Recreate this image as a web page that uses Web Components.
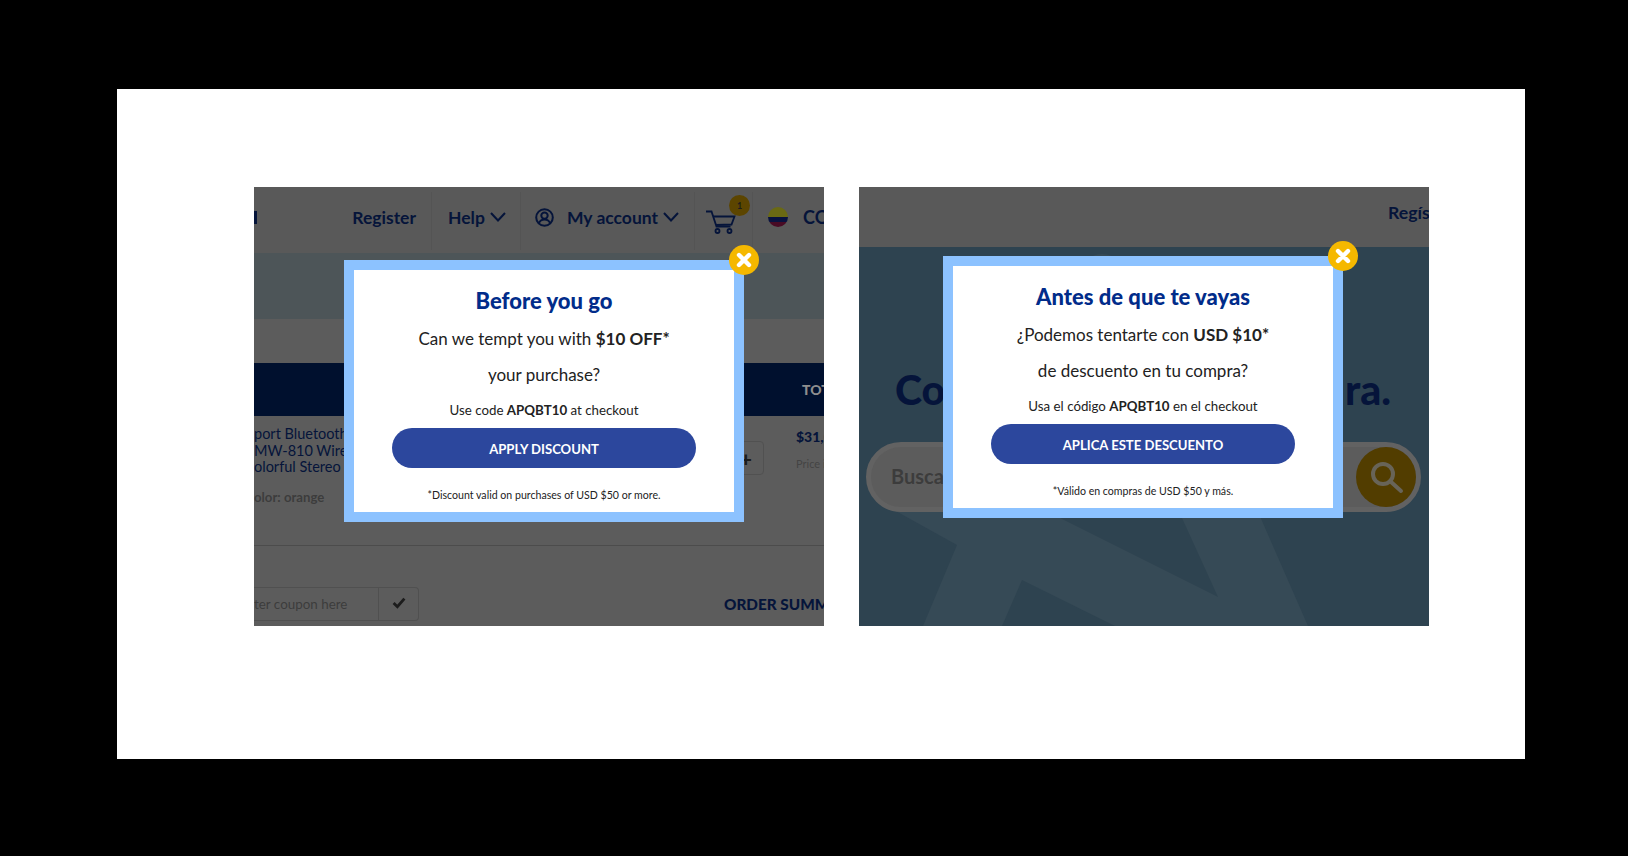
<!DOCTYPE html>
<html lang="en">
<head>
<meta charset="utf-8">
<title>Exit popups</title>
<style>
  html, body { margin: 0; background: #000; }
  body { font-family: Lato, "Liberation Sans", sans-serif; }
</style>
</head>
<body>
<slide-sheet>
  <cart-page>
    <promo-modal>
      <span slot="heading">Before you go</span>
      <span slot="first">Can we tempt you with <b>$10 OFF*</b></span>
      <span slot="second">your purchase?</span>
      <span slot="code">Use code <b>APQBT10</b> at checkout</span>
      <span slot="action">APPLY DISCOUNT</span>
      <span slot="note">*Discount valid on purchases of USD $50 or more.</span>
    </promo-modal>
  </cart-page>
  <search-page>
    <promo-modal>
      <span slot="heading">Antes de que te vayas</span>
      <span slot="first">¿Podemos tentarte con <b>USD $10*</b></span>
      <span slot="second">de descuento en tu compra?</span>
      <span slot="code">Usa el código <b>APQBT10</b> en el checkout</span>
      <span slot="action">APLICA ESTE DESCUENTO</span>
      <span slot="note">*Válido en compras de USD $50 y más.</span>
    </promo-modal>
  </search-page>
</slide-sheet>

<script>
class SlideSheet extends HTMLElement {
  constructor() {
    super();
    this.attachShadow({ mode: 'open' });
    this.shadowRoot.innerHTML = `
      <style>
        :host {
          display: flex;
          gap: 35px;
          box-sizing: border-box;
          width: 1408px;
          height: 670px;
          margin: 89px 0 0 117px;
          padding: 98px 0 0 137px;
          background: #fff;
        }
      </style>
      <slot></slot>
    `;
  }
}

class PromoModal extends HTMLElement {
  constructor() {
    super();
    this.attachShadow({ mode: 'open' });
    this.shadowRoot.innerHTML = `
      <style>
        :host {
          position: absolute;
          z-index: 2;
          box-sizing: border-box;
          width: 400px;
          height: 262px;
          padding-top: 14px;
          border: 10px solid #8cc2ff;
          background: #fff;
          color: #222;
          text-align: center;
          font-family: Lato, "Liberation Sans", sans-serif;
        }
        .close {
          position: absolute;
          top: -25px;
          right: -25px;
          width: 30px;
          height: 30px;
          border-radius: 50%;
          background: #f5b800;
          display: flex;
          align-items: center;
          justify-content: center;
        }
        h2 {
          margin: 0;
          font-size: 22px;
          line-height: 34px;
          font-weight: 900;
          color: #012c8a;
        }
        p { margin: 0; }
        .line { font-size: 17px; line-height: 36px; }
        .line.first { margin-top: 3px; }
        .code { font-size: 13.3px; line-height: 20px; margin-top: 7px; }
        .action {
          display: flex;
          align-items: center;
          justify-content: center;
          box-sizing: border-box;
          width: 304px;
          height: 40px;
          margin: 8px auto 0;
          padding-top: 1px;
          border-radius: 20px;
          background: #2c479d;
          color: #fff;
          font-size: 13.1px;
          font-weight: 700;
        }
        .note { font-size: 10.6px; line-height: 20px; margin-top: 17px; }
      </style>
      <div class="close">
        <svg width="16" height="16" viewBox="0 0 16 16"><path d="M3 3l10 10M13 3L3 13" stroke="#fff" stroke-width="4.4" stroke-linecap="round"/></svg>
      </div>
      <h2><slot name="heading"></slot></h2>
      <p class="line first"><slot name="first"></slot></p>
      <p class="line"><slot name="second"></slot></p>
      <p class="code"><slot name="code"></slot></p>
      <div class="action"><slot name="action"></slot></div>
      <p class="note"><slot name="note"></slot></p>
    `;
  }
}

class CartPage extends HTMLElement {
  constructor() {
    super();
    this.attachShadow({ mode: 'open' });
    this.shadowRoot.innerHTML = `
      <style>
        :host {
          display: block;
          position: relative;
          flex: none;
          width: 570px;
          height: 439px;
          background: #5c5c5c;
          font-family: Lato, "Liberation Sans", sans-serif;
          white-space: nowrap;
          --ink: #05143a;
        }
        ::slotted(promo-modal) { left: 90px; top: 73px; }
        .clip { width: 100%; height: 100%; overflow: hidden; }
        header {
          display: flex;
          height: 66px;
          background: #595959;
          color: var(--ink);
          font-size: 17.5px;
          font-weight: 700;
        }
        .nav {
          display: flex;
          flex: none;
          align-items: center;
          box-sizing: border-box;
          height: 58px;
          margin-top: 5px;
          padding-bottom: 8px;
          border-right: 1px solid #545454;
        }
        .register { width: 178px; justify-content: space-between; padding-right: 15px; }
        .sliver { width: 3px; height: 13px; background: var(--ink); }
        .help { width: 89px; padding-left: 16px; gap: 5px; }
        .account { width: 174px; padding-left: 14px; }
        .account svg:first-child { margin-right: 13px; }
        .account svg:last-child { margin-left: 5px; }
        .cart { width: 58px; padding-left: 10px; position: relative; }
        .cart svg { margin-top: 9px; }
        .badge {
          position: absolute;
          left: 34px;
          top: 3px;
          width: 21px;
          height: 21px;
          border-radius: 50%;
          background: #5c4500;
          color: #1c1c1c;
          font-size: 9px;
          line-height: 21px;
          text-align: center;
        }
        .country { padding-left: 15px; gap: 15px; font-size: 18px; border: 0; }
        .band { height: 66px; background: #4d5558; }
        .gap { height: 44px; }
        .titles {
          height: 53px;
          padding-left: 548px;
          background: #00102e;
          color: #8e8e8e;
          font-size: 14px;
          font-weight: 900;
          line-height: 54px;
        }
        .row {
          display: grid;
          grid-template-columns: 434px 44px auto;
          column-gap: 32px;
          box-sizing: border-box;
          height: 130px;
          border-bottom: 1px solid #4c4c4c;
        }
        .name { padding-top: 10px; color: var(--ink); font-size: 14.5px; line-height: 16.5px; }
        .name small { display: block; margin-top: 13px; color: #3c3c3c; font-size: 13.2px; font-weight: 700; }
        .qty {
          display: flex;
          align-items: center;
          justify-content: flex-end;
          box-sizing: border-box;
          height: 34px;
          margin-top: 25px;
          padding-right: 11px;
          border: 1px solid #515151;
          border-radius: 4px;
          color: #1c1c1c;
          font-size: 21px;
          font-weight: 900;
        }
        .price { padding-top: 12px; color: var(--ink); font-size: 14px; font-weight: 900; }
        .price small { display: block; margin-top: 12px; color: #444; font-size: 11px; font-weight: 400; }
        .bottom { display: flex; align-items: center; height: 34px; margin-top: 41px; }
        .coupon {
          display: flex;
          flex: none;
          align-items: center;
          box-sizing: border-box;
          width: 125px;
          height: 34px;
          border: 1px solid #505050;
          border-left: 0;
          color: #3c3c3c;
          font-size: 13.4px;
        }
        .check {
          display: flex;
          flex: none;
          align-items: center;
          justify-content: center;
          box-sizing: border-box;
          width: 40px;
          height: 34px;
          padding-bottom: 2px;
          border: 1px solid #505050;
          border-left: 0;
          border-radius: 0 4px 4px 0;
        }
        .summary { flex: none; margin-left: 305px; color: var(--ink); font-size: 15.3px; font-weight: 900; }
      </style>
      <div class="clip">
        <header>
          <div class="nav register"><span class="sliver"></span><span>Register</span></div>
          <div class="nav help">Help
            <svg width="16" height="10" viewBox="0 0 16 10"><path d="M1 1l7 7.500L15 1" fill="none" stroke="currentColor" stroke-width="2"/></svg>
          </div>
          <div class="nav account">
            <svg width="19" height="19" viewBox="0 0 19 19" fill="none" stroke="currentColor" stroke-width="2"><circle cx="9.500" cy="9.500" r="8.300"/><circle cx="9.500" cy="7.600" r="3.200"/><path d="M3.800 15.600c1-3 3.200-4 5.700-4s4.700 1 5.700 4"/></svg>
            My account
            <svg width="16" height="10" viewBox="0 0 16 10"><path d="M1 1l7 7.500L15 1" fill="none" stroke="currentColor" stroke-width="2"/></svg>
          </div>
          <div class="nav cart">
            <svg width="31" height="24" viewBox="0 0 31 24" fill="none" stroke="currentColor" stroke-width="1.800"><path d="M1 1.500h5.500l5 15h14"/><path d="M8 6.500h21.500l-3 8-15.500.5"/><circle cx="12.500" cy="21" r="2"/><circle cx="24.500" cy="21" r="2"/></svg>
            <span class="badge">1</span>
          </div>
          <div class="nav country">
            <svg width="20" height="20" viewBox="0 0 20 20"><clipPath id="f"><circle cx="10" cy="10" r="10"/></clipPath><g clip-path="url(#f)"><rect width="20" height="10" fill="#6a6914"/><rect y="10" width="20" height="5" fill="#081240"/><rect y="15" width="20" height="5" fill="#480a24"/></g></svg>
            CO
          </div>
        </header>
        <div class="band"></div>
        <div class="gap"></div>
        <div class="titles">TOTAL</div>
        <div class="row">
          <div class="name">port Bluetooth<br>MW-810 Wire<br>olorful Stereo<small>olor: orange</small></div>
          <div class="qty">+</div>
          <div class="price">$31,000<small>Price in</small></div>
        </div>
        <div class="bottom">
          <div class="coupon">ter coupon here</div>
          <div class="check">
            <svg width="14" height="12" viewBox="0 0 13 11"><path d="M1.500 5.500l3.500 3.500 6.500-7.500" fill="none" stroke="#1c1c1c" stroke-width="2.600"/></svg>
          </div>
          <div class="summary">ORDER SUMMARY</div>
        </div>
      </div>
      <slot></slot>
    `;
  }
}

class SearchPage extends HTMLElement {
  constructor() {
    super();
    this.attachShadow({ mode: 'open' });
    this.shadowRoot.innerHTML = `
      <style>
        :host {
          display: block;
          position: relative;
          flex: none;
          width: 570px;
          height: 439px;
          background: #2e4350;
          font-family: Lato, "Liberation Sans", sans-serif;
          white-space: nowrap;
          --ink: #05143a;
        }
        ::slotted(promo-modal) { left: 84px; top: 69px; }
        .clip { position: relative; width: 100%; height: 100%; overflow: hidden; }
        .star { position: absolute; left: 0; top: 0; }
        header {
          position: relative;
          display: flex;
          align-items: center;
          box-sizing: border-box;
          height: 60px;
          padding: 0 0 9px 529px;
          background: #595959;
          color: var(--ink);
          font-size: 17.7px;
          font-weight: 700;
        }
        header span { flex: none; }
        .headline {
          position: relative;
          display: flex;
          justify-content: space-between;
          margin: 115px 0 0 36px;
          width: 496px;
          color: var(--ink);
          font-size: 41px;
          font-weight: 900;
          line-height: 56px;
        }
        .pill {
          position: relative;
          display: flex;
          align-items: center;
          justify-content: space-between;
          box-sizing: border-box;
          width: 555px;
          height: 70px;
          margin: 24px 0 0 7px;
          padding: 0 0 2px 20px;
          border: 5px solid #626262;
          border-radius: 35px;
          background: #5c5c5c;
          color: #3c3c3c;
          font-size: 20px;
          font-weight: 700;
        }
        .go {
          display: flex;
          align-items: center;
          justify-content: center;
          flex: none;
          width: 60px;
          height: 60px;
          margin-bottom: -2px;
          border-radius: 50%;
          background: #523d00;
        }
      </style>
      <div class="clip">
        <svg class="star" width="570" height="439" viewBox="0 0 570 439">
          <path d="M228 72q15-10 30 0l30 12H228z" fill="#364a56"/>
          <path d="M26 318L98 358L64 439H449L396 318z" fill="#364a56"/>
          <path d="M163 393L143 439H256z" fill="#2e4350"/>
          <path d="M201 331H323L359 410z" fill="#2e4350"/>
        </svg>
        <header><span>Regístrate</span></header>
        <div class="headline"><span>Co</span><span>ra.</span></div>
        <div class="pill">
          <span>Busca</span>
          <div class="go">
            <svg width="40" height="40" viewBox="0 0 40 40" fill="none" stroke="#686458" stroke-width="4"><circle cx="17" cy="17" r="10"/><path d="M24 24l11 10" stroke-linecap="round"/></svg>
          </div>
        </div>
      </div>
      <slot></slot>
    `;
  }
}

customElements.define('slide-sheet', SlideSheet);
customElements.define('promo-modal', PromoModal);
customElements.define('cart-page', CartPage);
customElements.define('search-page', SearchPage);
</script>
</body>
</html>
